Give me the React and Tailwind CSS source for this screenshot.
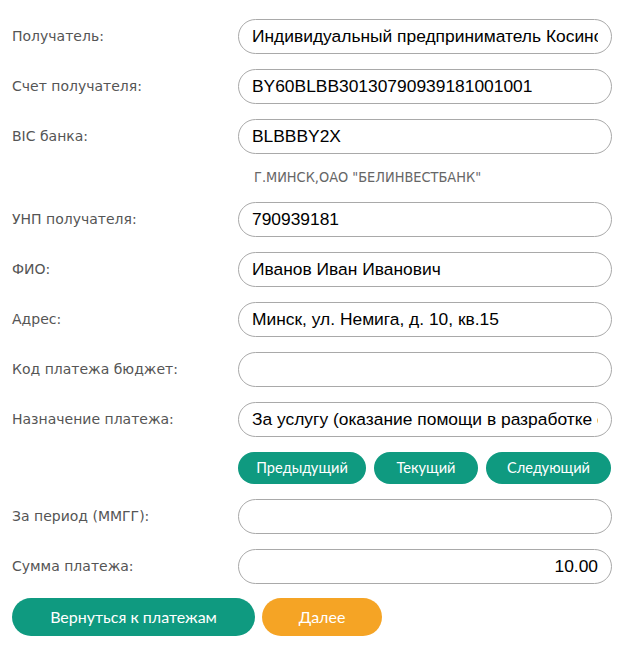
const rows = [
  { label: "Получатель:", value: "Индивидуальный предприниматель Косинова Анна Сергеевна" },
  { label: "Счет получателя:", value: "BY60BLBB30130790939181001001" },
  { label: "BIC банка:", value: "BLBBBY2X", note: 'Г.МИНСК,ОАО "БЕЛИНВЕСТБАНК"' },
  { label: "УНП получателя:", value: "790939181" },
  { label: "ФИО:", value: "Иванов Иван Иванович" },
  { label: "Адрес:", value: "Минск, ул. Немига, д. 10, кв.15" },
  { label: "Код платежа бюджет:", value: "" },
  { label: "Назначение платежа:", value: "За услугу (оказание помощи в разработке сайта)", period: true },
  { label: "За период (ММГГ):", value: "" },
  { label: "Сумма платежа:", value: "10.00", right: true },
];

function Field({ label, value, right }) {
  return (
    <div className="flex items-center h-[35px]">
      <label className="w-[226px] shrink-0 text-[14px] text-[#555] font-['Tahoma','DejaVu_Sans',sans-serif]">
        {label}
      </label>
      <input
        readOnly
        value={value}
        className={
          "w-[374px] h-[35px] rounded-full border border-[#a9a9a9] bg-white px-[13px] text-[17.4px] text-black outline-none font-['Liberation_Sans',Arial,sans-serif] " +
          (right ? "text-right" : "")
        }
      />
    </div>
  );
}

export default function App() {
  return (
    <div className="bg-white w-[634px] min-h-[647px] pt-[19px] pl-[12px] font-['Liberation_Sans',sans-serif]">
      <div className="flex flex-col gap-[15px]">
        {rows.map((r) => (
          <div key={r.label} className="flex flex-col gap-[15px]">
            <Field {...r} />
            {r.note && (
              <div className="pl-[242px] -mt-[2px] h-[20px] text-[14.4px] leading-[20px] text-[#666] font-['DejaVu_Sans_Condensed','DejaVu_Sans',sans-serif]">
                {r.note}
              </div>
            )}
            {r.period && (
              <div className="pl-[226px] flex gap-[8px] font-['Lato',sans-serif] text-[14.6px] text-white">
                <button className="w-[128px] h-[32px] rounded-full bg-[#0f9a80]">Предыдущий</button>
                <button className="w-[104px] h-[32px] rounded-full bg-[#0f9a80]">Текущий</button>
                <button className="w-[125px] h-[32px] rounded-full bg-[#0f9a80]">Следующий</button>
              </div>
            )}
          </div>
        ))}
      </div>
      <div className="flex gap-[7px] mt-[14px] font-['Lato',sans-serif] text-[16px] text-white">
        <button className="w-[243px] h-[38px] rounded-full bg-[#0f9a80]">Вернуться к платежам</button>
        <button className="w-[120px] h-[38px] rounded-full bg-[#f5a425]">Далее</button>
      </div>
    </div>
  );
}
